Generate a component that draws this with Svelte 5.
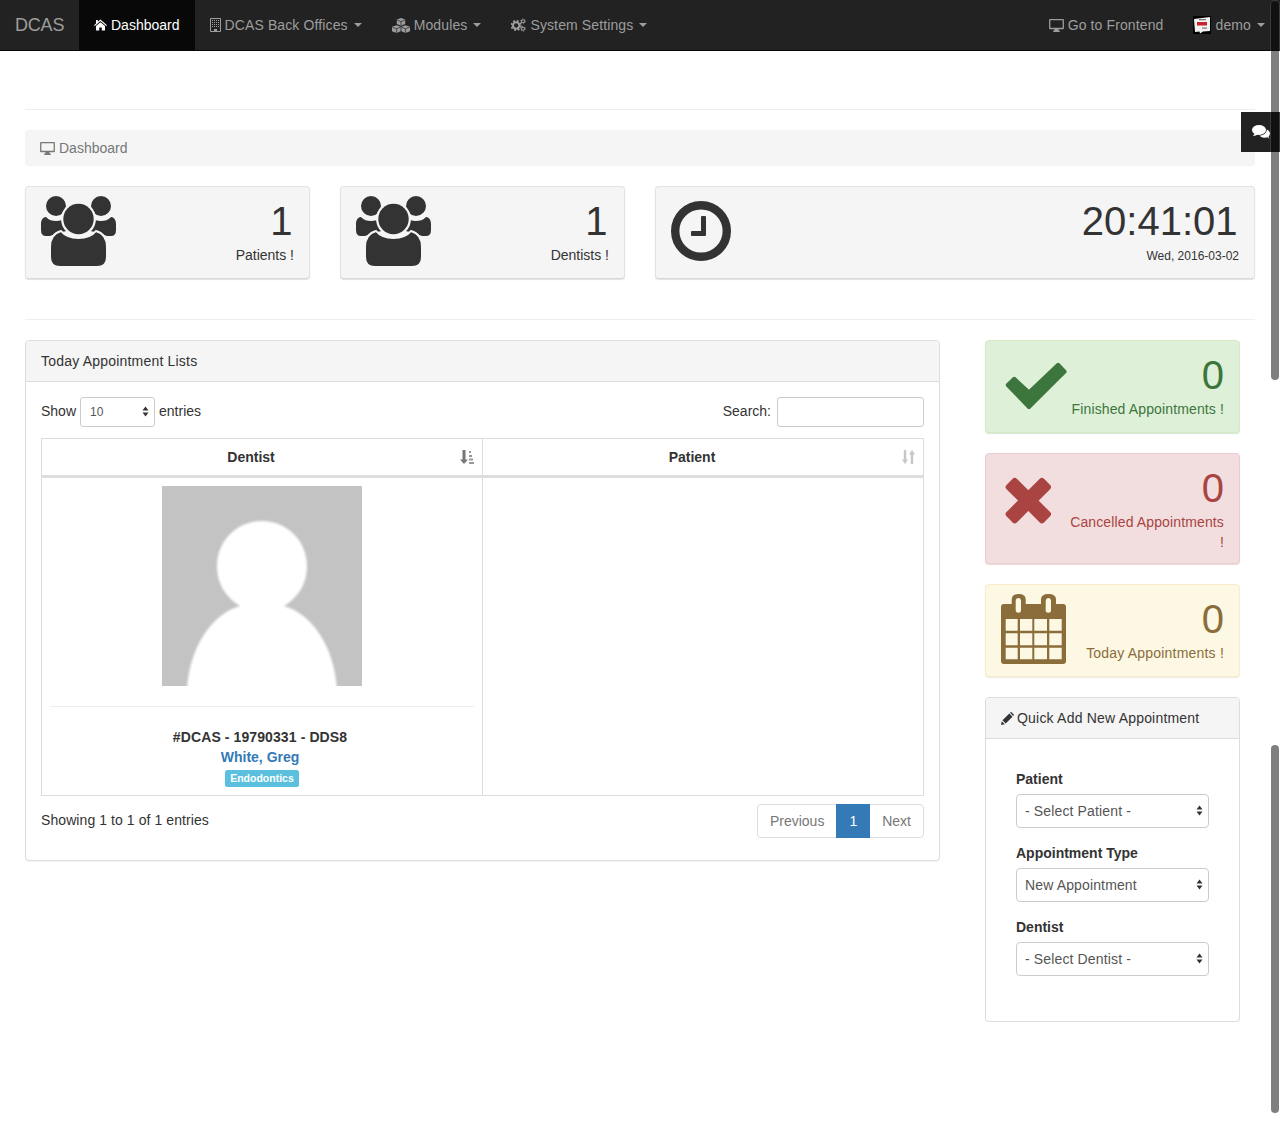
<script>
  const navItems = [
    { label: 'DCAS Back Offices', icon: 'building' },
    { label: 'Modules', icon: 'cubes' },
    { label: 'System Settings', icon: 'cogs' }
  ];
  const selects = [
    { label: 'Patient', value: '- Select Patient -' },
    { label: 'Appointment Type', value: 'New Appointment' },
    { label: 'Dentist', value: '- Select Dentist -' }
  ];
</script>

{#snippet desktop()}
  <svg class="ico-desktop" width="15" height="13" viewBox="0 0 16 14" aria-hidden="true">
    <path fill="currentColor" fill-rule="evenodd" d="M1 0H15Q16 0 16 1V10Q16 11 15 11H10L10.400 12.500H11.500V14H4.500V12.500H5.600L6 11H1Q0 11 0 10V1Q0 0 1 0ZM1.400 1.400V9.400H14.600V1.400Z"/>
  </svg>
{/snippet}

{#snippet group()}
  <svg class="big" width="75" height="70" viewBox="0 -3 75 70" aria-hidden="true">
    <circle cx="15" cy="7" r="10" fill="#333"/>
    <circle cx="60" cy="7" r="10" fill="#333"/>
    <path fill="#333" d="M5 18C8 21 11 22 15 22C19 22 22 21 24 19L26 32C18 33 12 36 9 37H5Q0 37 0 31V25C0 21 2 18 5 18Z"/>
    <path fill="#333" d="M70 18C67 21 64 22 60 22C56 22 53 21 51 19L49 32C57 33 63 36 66 37H70Q75 37 75 31V25C75 21 73 18 70 18Z"/>
    <path fill="#333" stroke="#f5f5f5" stroke-width="2" d="M9 48C9 40 13 34 20 32C24 37 30 39 37.500 39C45 39 51 37 55 32C62 34 66 40 66 48V58Q66 68 56 68H19Q9 68 9 58Z"/>
    <circle cx="37.500" cy="20" r="17.500" fill="#f5f5f5"/>
    <circle cx="37.500" cy="20" r="15.200" fill="#333"/>
  </svg>
{/snippet}

{#snippet sel(value, small)}
  <div class="sel" class:small>
    <select><option>{value}</option></select>
    <svg class="arrows" width="7" height="11" viewBox="0 0 7 11" aria-hidden="true">
      <path fill="#333" d="M3.500 0.500L6.500 4.500H0.500ZM0.500 6.500H6.500L3.500 10.500Z"/>
    </svg>
  </div>
{/snippet}

<nav class="navbar">
  <a class="brand" href="#top">DCAS</a>
  <a class="nav-item active" href="#top">
    <svg width="13" height="12" viewBox="0 0 13 12" aria-hidden="true">
      <path fill="#fff" d="M6.500 0.500L13 6.200L12.200 7.100L6.500 2.100L0.800 7.100L0 6.200L2 4.400V1H3.800V2.800ZM6.500 3.200L11 7.100V11.500H7.800V8.400H5.200V11.500H2V7.100Z"/>
    </svg>
    <span>Dashboard</span>
  </a>
  {#each navItems as item}
    <a class="nav-item" href="#top">
      {#if item.icon === 'building'}
        <svg width="11" height="14" viewBox="0 0 11 14" aria-hidden="true">
          <path fill="none" stroke="currentColor" d="M0.500 0.500H10.500V13.500H0.500Z"/>
          <path stroke="currentColor" stroke-dasharray="1 1" d="M2.500 2V10M4.500 2V10M6.500 2V10M8.500 2V10"/>
          <path fill="currentColor" d="M4 11H7V14H4Z"/>
        </svg>
      {:else if item.icon === 'cubes'}
        <svg width="18" height="15" viewBox="0 0 18 15" aria-hidden="true">
          <path fill="currentColor" d="M9 0L13.200 1.600V6L9 7.800L4.800 6V1.600ZM4.600 7.200L8.600 8.800V13.200L4.600 15L0 13.200V8.800ZM13.400 7.200L18 8.800V13.200L13.400 15L9.400 13.200V8.800Z"/>
          <path fill="none" stroke="#222" stroke-width=".7" d="M5 2L9 3.600L13 2M9 3.600V7.600M0.300 9.200L4.600 10.800L8.400 9.200M4.600 10.800V15M9.600 9.200L13.400 10.800L17.700 9.200M13.400 10.800V15"/>
        </svg>
      {:else}
        <svg width="15" height="14" viewBox="0 0 16 14" aria-hidden="true">
          <circle cx="5.500" cy="7.500" r="3.400" fill="none" stroke="currentColor" stroke-width="2.200"/>
          <circle cx="5.500" cy="7.500" r="5" fill="none" stroke="currentColor" stroke-width="2" stroke-dasharray="2 1.930"/>
          <circle cx="12.800" cy="3" r="1.600" fill="none" stroke="currentColor" stroke-width="1.200"/>
          <circle cx="12.800" cy="3" r="2.600" fill="none" stroke="currentColor" stroke-width="1" stroke-dasharray="1.200 1.520"/>
          <circle cx="12.800" cy="11" r="1.600" fill="none" stroke="currentColor" stroke-width="1.200"/>
          <circle cx="12.800" cy="11" r="2.600" fill="none" stroke="currentColor" stroke-width="1" stroke-dasharray="1.200 1.520"/>
        </svg>
      {/if}
      <span class="wide">{item.label}</span>
      <span class="caret"></span>
    </a>
  {/each}
  <div class="spacer"></div>
  <a class="nav-item" href="#top">{@render desktop()} <span class="wide">Go to Frontend</span></a>
  <a class="nav-item" href="#top">
    <svg width="18" height="18" viewBox="0 0 18 18" aria-hidden="true">
      <rect width="18" height="18" fill="#000"/>
      <path fill="#f2f2f2" d="M1 3L17 1V15L10 15.500L7 17.500L6.500 15.500L2 16Z"/>
      <rect x="6" y="3" width="7" height="1.300" fill="#777"/>
      <rect x="4" y="6" width="10" height="3.500" fill="#c8202c"/>
      <rect x="9" y="11.500" width="5" height="1.200" fill="#777"/>
    </svg>
    <span class="wide">demo</span>
    <span class="caret"></span>
  </a>
</nav>

<div class="chat-tab">
  <svg width="18" height="14" viewBox="0 0 18 14" aria-hidden="true">
    <ellipse cx="12.500" cy="8.500" rx="5.500" ry="4.300" fill="#fff"/>
    <path fill="#fff" d="M14 11L17.500 14Q16 12 16.500 10Z"/>
    <ellipse cx="7" cy="5" rx="7.800" ry="5.800" fill="#222"/>
    <ellipse cx="7" cy="5" rx="7" ry="5" fill="#fff"/>
    <path fill="#fff" d="M3 8L1 11Q4 10.500 6 9.500Z"/>
  </svg>
</div>
<div class="scroll scroll-a"></div>
<div class="scroll scroll-b"></div>

<main class="page">
  <hr class="first" />
  <div class="breadcrumb">{@render desktop()} <span>Dashboard</span></div>

  <section class="tiles">
    <div class="tile small-tile">
      {@render group()}
      <div class="txt"><div class="num">1</div><div class="cap">Patients !</div></div>
    </div>
    <div class="tile small-tile">
      {@render group()}
      <div class="txt"><div class="num">1</div><div class="cap">Dentists !</div></div>
    </div>
    <div class="tile wide-tile">
      <svg class="big" width="75" height="70" viewBox="0 -3 75 70" aria-hidden="true">
        <circle cx="30" cy="32" r="25.800" fill="none" stroke="#333" stroke-width="8.400"/>
        <path fill="#333" d="M31 17H34Q35 17 35 18V36Q35 37 34 37H21Q20 37 20 36V33Q20 32 21 32H30V18Q30 17 31 17Z"/>
      </svg>
      <div class="txt"><div class="num">20:41:01</div><div class="date">Wed, 2016-03-02</div></div>
    </div>
  </section>

  <hr />

  <section class="columns">
    <div class="panel main-panel">
      <div class="panel-head"><span>Today Appointment Lists</span></div>
      <div class="panel-body">
        <div class="controls">
          <div class="length"><span>Show</span> {@render sel('10', true)} <span>entries</span></div>
          <div class="search"><span>Search:</span> <input type="search" aria-label="Search" /></div>
        </div>

        <table>
          <thead>
            <tr>
              <th>
                Dentist
                <svg class="sort" width="14" height="14" viewBox="0 0 14 14" aria-hidden="true">
                  <path fill="#777" d="M2.500 0H5.500V9.500H8L4 14L0 9.500H2.500Z"/>
                  <path fill="#999" d="M9 1H11V3H9ZM9 5H12V7H9ZM9 8.500H13V10.500H9ZM9 12H14V14H9Z"/>
                </svg>
              </th>
              <th>
                Patient
                <svg class="sort" width="13" height="14" viewBox="0 0 13 14" aria-hidden="true">
                  <path fill="#c6c6c6" d="M1.800 0H4.200V9.500H6L3 14L0 9.500H1.800ZM8.800 14H11.200V4.500H13L10 0L7 4.500H8.800Z"/>
                </svg>
              </th>
            </tr>
          </thead>
          <tbody>
            <tr>
              <td class="dentist">
                <svg class="photo" width="200" height="200" viewBox="0 0 200 200" role="img" aria-label="Dentist photo">
                  <defs><filter id="soft"><feGaussianBlur stdDeviation="0.800"/></filter></defs>
                  <rect width="200" height="200" fill="#c3c3c3"/>
                  <path filter="url(#soft)" fill="#fff" d="M78 120C63 111 55 97 55 80C55 55 75 35 100 35C125 35 145 55 145 80C145 97 137 111 122 120C150 128 172 160 175 203H25C28 160 50 128 78 120Z"/>
                </svg>
                <hr class="cell-rule" />
                <strong>#DCAS - 19790331 - DDS8</strong>
                <a href="#top" class="name">White, Greg&nbsp;</a>
                <span class="label">Endodontics</span>
              </td>
              <td></td>
            </tr>
          </tbody>
        </table>

        <div class="foot">
          <div class="info">Showing 1 to 1 of 1 entries</div>
          <div class="pagination">
            <a href="#top">Previous</a><a href="#top" class="current">1</a><a href="#top">Next</a>
          </div>
        </div>
      </div>
    </div>

    <aside class="side">
      <div class="tile alert ok">
        <svg class="big" width="66" height="70" viewBox="0 -3 66 70" aria-hidden="true">
          <path fill="#3c763d" stroke="#3c763d" stroke-width="4" stroke-linejoin="round" d="M13.300 25.800L28 39.400L57.200 11.800L63.600 18.700L28 54.200L6.800 32Z"/>
        </svg>
        <div class="txt"><div class="num">0</div><div class="cap">Finished Appointments !</div></div>
      </div>
      <div class="tile alert bad">
        <svg class="big" width="66" height="70" viewBox="0 -3 66 70" aria-hidden="true">
          <g transform="rotate(45 27.300 34.600)" fill="#a94442">
            <rect x="0.800" y="27.300" width="53" height="14.600" rx="3"/>
            <rect x="20" y="8.100" width="14.600" height="53" rx="3"/>
          </g>
        </svg>
        <div class="txt"><div class="num">0</div><div class="cap">Cancelled Appointments !</div></div>
      </div>
      <div class="tile alert warn">
        <svg class="big" width="66" height="70" viewBox="0 -3 66 70" aria-hidden="true">
          <path fill="#8a6d3b" d="M3 7H10.700V2.500Q10.700 -3 17.700 -3Q24.700 -3 24.700 2.500V7H40V2.500Q40 -3 47.500 -3Q55 -3 55 2.500V7H62Q65 7 65 10V64Q65 67 62 67H3Q0 67 0 64V10Q0 7 3 7Z"/>
          <path fill="#fcf8e3" d="M14.700 4.500Q14.700 1 17.700 1Q20 1 20 4.500V13.500Q20 15.700 17.700 15.700Q14.700 15.700 14.700 13.500ZM44.700 4.500Q44.700 1 47.500 1Q50 1 50 4.500V13.500Q50 15.700 47.500 15.700Q44.700 15.700 44.700 13.500Z"/>
          <path fill="#fcf8e3" d="M4.700 22H16.700V33.700H4.700ZM19 22H31.300V33.700H19ZM33.300 22H46V33.700H33.300ZM48.300 22H60.700V33.700H48.300ZM4.700 36.300H16.700V48.300H4.700ZM19 36.300H31.300V48.300H19ZM33.300 36.300H46V48.300H33.300ZM48.300 36.300H60.700V48.300H48.300ZM4.700 50.700H16.700V62.300H4.700ZM19 50.700H31.300V62.300H19ZM33.300 50.700H46V62.300H33.300ZM48.300 50.700H60.700V62.300H48.300Z"/>
        </svg>
        <div class="txt"><div class="num">0</div><div class="cap">Today Appointments !</div></div>
      </div>

      <div class="panel quick">
        <div class="panel-head">
          <svg width="13" height="13" viewBox="0 0 13 13" aria-hidden="true">
            <path fill="#333" d="M0 13L0.800 9.200L3.800 12.200ZM1.500 8.300L8.300 1.500L11.500 4.700L4.700 11.500ZM9 0.800L9.700 0.200Q10 0 10.500 0.200L12.800 2.500Q13 3 12.800 3.300L12.200 4Z"/>
          </svg>
          <span>Quick Add New Appointment</span>
        </div>
        <form class="quick-body">
          {#each selects as s}
            <div class="field">
              <span class="field-label">{s.label}</span>
              {@render sel(s.value, false)}
            </div>
          {/each}
        </form>
      </div>
    </aside>
  </section>
</main>

<style>
  :global(body) {
    margin: 0;
    background: #fff;
    color: #333;
    font-family: "Liberation Sans", Arial, sans-serif;
    font-size: 14px;
    line-height: 20px;
    overflow: hidden;
  }
  * { box-sizing: border-box; }
  a { text-decoration: none; }

  .navbar {
    display: flex;
    height: 51px;
    background: #222;
    border-bottom: 1px solid #080808;
    color: #9d9d9d;
  }
  .brand {
    width: 79px;
    padding: 15px;
    font-size: 18px;
    letter-spacing: -.2px;
    color: #9d9d9d;
    line-height: 20px;
  }
  .nav-item {
    display: flex;
    align-items: center;
    gap: 4px;
    padding: 0 15px;
    color: #9d9d9d;
  }
  .nav-item .wide { letter-spacing: .12px; }
  .nav-item.active {
    background: #080808;
    color: #fff;
  }
  .spacer { flex: 1; }
  .caret {
    width: 0;
    height: 0;
    margin-left: 2px;
    border-top: 4px solid currentColor;
    border-left: 4px solid transparent;
    border-right: 4px solid transparent;
  }
  .chat-tab {
    position: absolute;
    top: 112px;
    right: 0;
    width: 39px;
    height: 40px;
    background: #222;
    padding: 13px 0 0 11px;
  }
  .chat-tab svg { display: block; }
  .scroll {
    position: absolute;
    left: 1271px;
    width: 8px;
    background: rgba(0, 0, 0, .5);
    border-radius: 4px;
    box-shadow: 0 0 0 1px rgba(255, 255, 255, .12);
  }
  .scroll-a { top: 1px; height: 379px; }
  .scroll-b { top: 745px; height: 368px; }

  .page { padding: 0 25px; }
  hr {
    height: 1px;
    margin: 40px 0 20px;
    border: 0;
    background: #eee;
  }
  hr.first { margin-top: 58px; }
  .breadcrumb {
    display: flex;
    align-items: center;
    gap: 4px;
    height: 36px;
    margin-bottom: 20px;
    padding: 0 15px;
    background: #f5f5f5;
    border-radius: 4px;
    color: #777;
  }

  .tiles { display: flex; gap: 30px; }
  .tile {
    display: flex;
    justify-content: space-between;
    padding: 12px 15px 11px;
    background: #f5f5f5;
    border: 1px solid #e3e3e3;
    border-bottom-color: #d9d9d9;
    border-radius: 4px;
    box-shadow: 0 1px 1px rgba(0, 0, 0, .12);
  }
  .small-tile { width: 285px; }
  .wide-tile { width: 600px; }
  .big { display: block; flex: none; margin: -3px 0 1px; }
  .txt { text-align: right; }
  .num { font-size: 40px; line-height: 44px; margin-bottom: 2px; }
  .small-tile .num, .wide-tile .num { margin-right: 1.500px; }
  .cap { line-height: 20px; }
  .alert .cap { letter-spacing: .13px; }
  .alert.warn .cap { letter-spacing: .2px; }
  .date { font-size: 12px; line-height: 20px; padding-top: 1px; }
  .alert .txt { width: 158px; }

  .columns { display: flex; gap: 45px; align-items: flex-start; }
  .main-panel { width: 915px; }
  .side {
    display: flex;
    flex-direction: column;
    gap: 20px;
    width: 255px;
  }
  .panel {
    background: #fff;
    border: 1px solid #ddd;
    border-radius: 4px;
    box-shadow: 0 1px 1px rgba(0, 0, 0, .05);
  }
  .panel-head {
    display: flex;
    align-items: center;
    gap: 3px;
    height: 41px;
    padding: 0 15px;
    background: #f5f5f5;
    border-bottom: 1px solid #ddd;
    border-radius: 3px 3px 0 0;
    letter-spacing: .2px;
  }
  .panel-body { padding: 15px; }
  .controls {
    display: flex;
    justify-content: space-between;
    height: 30px;
    margin-bottom: 11px;
  }
  .length, .search {
    display: flex;
    align-items: center;
    gap: 4px;
  }
  .length span, .search span { padding-bottom: 2px; }
  .search { gap: 6px; }
  .search input {
    width: 147px;
    height: 30px;
    border: 1px solid #ccc;
    border-radius: 3px;
    background: #fff;
    outline: none;
  }

  .sel { position: relative; width: 100%; }
  .sel.small { width: 75px; }
  select {
    display: block;
    width: 100%;
    height: 34px;
    padding: 0 8px;
    appearance: none;
    background: #fff;
    border: 1px solid #ccc;
    border-radius: 4px;
    color: #555;
    font: 14px "Liberation Sans", Arial, sans-serif;
    letter-spacing: .14px;
  }
  .small select { height: 30px; font-size: 12px; padding: 0 9px; border-radius: 3px; letter-spacing: 0; }
  .arrows { position: absolute; right: 6px; top: 11px; }
  .small .arrows { top: 9px; }

  table {
    width: 883px;
    border-collapse: collapse;
    table-layout: fixed;
    border: 1px solid #ddd;
  }
  th {
    position: relative;
    height: 38px;
    padding: 0 22px 1px 0;
    border: 1px solid #ddd;
    border-bottom: 3px solid #ddd;
    text-align: center;
    font-weight: bold;
  }
  .sort { position: absolute; right: 8px; top: 11px; }
  td {
    padding: 8px;
    border: 1px solid #ddd;
    text-align: center;
    vertical-align: top;
  }
  .photo { display: block; margin: 0 auto; }
  .cell-rule { margin: 20px 0; }
  td strong, .name { display: block; font-weight: bold; }
  td strong { letter-spacing: .1px; padding-right: 4px; }
  .name { color: #337ab7; }
  .label {
    display: block;
    width: 74px;
    height: 17px;
    margin: 3px auto 0;
    background: #5bc0de;
    border-radius: 2.500px;
    color: #fff;
    font-size: 10.500px;
    font-weight: bold;
    line-height: 16px;
  }

  .foot {
    display: flex;
    justify-content: space-between;
    margin-top: 8px;
    margin-bottom: 7px;
  }
  .info { padding-top: 6px; letter-spacing: .08px; }
  .pagination { display: flex; height: 34px; }
  .pagination a {
    padding: 6px 12px;
    border: 1px solid #ddd;
    margin-left: -1px;
    color: #777;
    background: #fff;
  }
  .pagination a:first-child { border-radius: 4px 0 0 4px; }
  .pagination a:last-child { border-radius: 0 4px 4px 0; }
  .pagination a.current {
    position: relative;
    background: #337ab7;
    border-color: #337ab7;
    color: #fff;
  }

  .ok { background: #dff0d8; border-color: #d6e9c6; color: #3c763d; box-shadow: 0 1px 1px rgba(60, 118, 61, .2); }
  .bad { background: #f2dede; border-color: #ebccd1; color: #a94442; box-shadow: 0 1px 1px rgba(169, 68, 66, .2); }
  .warn { background: #fcf8e3; border-color: #faebcc; color: #8a6d3b; box-shadow: 0 1px 1px rgba(138, 109, 59, .15); }

  .quick-body { padding: 30px 30px 45px; }
  .field { margin-bottom: 15px; }
  .field:last-child { margin-bottom: 0; }
  .field-label { display: block; margin-bottom: 5px; font-weight: bold; }
</style>
